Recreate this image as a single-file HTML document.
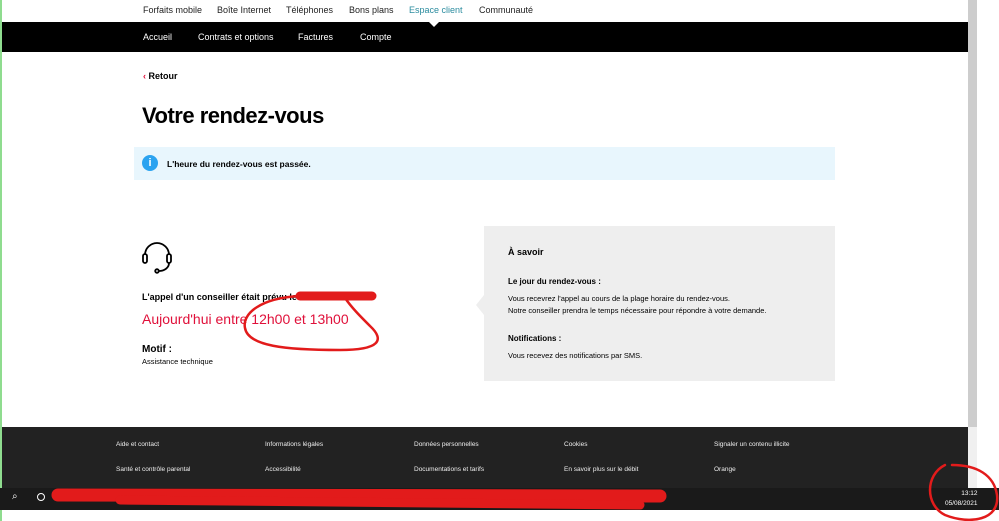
<!DOCTYPE html>
<html><head><meta charset="utf-8"><style>
*{margin:0;padding:0;box-sizing:border-box}
body{width:999px;height:521px;overflow:hidden;background:#fff;font-family:"Liberation Sans",sans-serif;position:relative;color:#000}
.a{position:absolute;white-space:nowrap}
.top span{position:absolute;top:5px;font-size:9px;color:#222}
.blk span{position:absolute;top:10px;font-size:9px;color:#fff}
.ft span{position:absolute;font-size:6.5px;color:#eee}
</style></head><body>
<div class="a" style="left:0;top:0;width:2px;height:521px;background:#8fdc8f"></div>
<div class="a top" style="left:0;top:0;width:968px;height:22px">
<span style="left:143px">Forfaits mobile</span>
<span style="left:217px">Boîte Internet</span>
<span style="left:286px">Téléphones</span>
<span style="left:349px">Bons plans</span>
<span style="left:409px;color:#2b8c9f">Espace client</span>
<span style="left:479px">Communauté</span>
</div>
<div class="a blk" style="left:2px;top:22px;width:966px;height:30px;background:#000">
<span style="left:141px">Accueil</span>
<span style="left:196px">Contrats et options</span>
<span style="left:296px">Factures</span>
<span style="left:358px">Compte</span>
</div>
<div class="a" style="left:429px;top:22px;width:0;height:0;border-left:5px solid transparent;border-right:5px solid transparent;border-top:5px solid #fff"></div>
<div class="a" style="left:143px;top:71px;font-size:9px;font-weight:bold"><span style="color:#e0103a">‹</span> Retour</div>
<div class="a" style="left:142px;top:103px;font-size:22px;font-weight:bold;letter-spacing:-0.5px">Votre rendez-vous</div>
<div class="a" style="left:134px;top:147px;width:701px;height:33px;background:#e8f6fd"></div>
<div class="a" style="left:142px;top:155px;width:16px;height:16px;border-radius:50%;background:#2ba3f0;color:#fff;font-size:11px;font-weight:bold;text-align:center;line-height:16px">i</div>
<div class="a" style="left:167px;top:159px;font-size:8.5px;font-weight:bold">L'heure du rendez-vous est passée.</div>
<svg class="a" style="left:141px;top:240px" width="34" height="34" viewBox="0 0 34 34" fill="none" stroke="#000" stroke-width="1.8"><path d="M4 15a12 12 0 0 1 24 0"/><rect x="2" y="14" width="4" height="9" rx="2"/><rect x="26" y="14" width="4" height="9" rx="2"/><path d="M28 23c0 5-5 8-10 8"/><circle cx="16" cy="31" r="1.8"/></svg>
<div class="a" style="left:142px;top:292px;font-size:9px;font-weight:bold">L'appel d'un conseiller était prévu le</div>
<div class="a" style="left:142px;top:311px;font-size:14px;color:#e0103a">Aujourd'hui entre 12h00 et 13h00</div>
<div class="a" style="left:142px;top:344px;font-size:10px;font-weight:bold">Motif :</div>
<div class="a" style="left:142px;top:357px;font-size:7.5px">Assistance technique</div>
<div class="a" style="left:484px;top:226px;width:351px;height:155px;background:#eee"></div>
<div class="a" style="left:476px;top:295px;width:0;height:0;border-top:10px solid transparent;border-bottom:10px solid transparent;border-right:8px solid #eee"></div>
<div class="a" style="left:508px;top:247px;font-size:9px;font-weight:bold">À savoir</div>
<div class="a" style="left:508px;top:277px;font-size:8px;font-weight:bold">Le jour du rendez-vous :</div>
<div class="a" style="left:508px;top:293px;font-size:7.5px;line-height:12px">Vous recevrez l'appel au cours de la plage horaire du rendez-vous.<br>Notre conseiller prendra le temps nécessaire pour répondre à votre demande.</div>
<div class="a" style="left:508px;top:334px;font-size:8px;font-weight:bold">Notifications :</div>
<div class="a" style="left:508px;top:351px;font-size:7.5px">Vous recevez des notifications par SMS.</div>
<div class="a" style="left:968px;top:0;width:9px;height:427px;background:#cdcdcd"></div>
<div class="a ft" style="left:2px;top:427px;width:966px;height:61px;background:#222">
<span style="left:114px;top:14px">Aide et contact</span>
<span style="left:263px;top:14px">Informations légales</span>
<span style="left:412px;top:14px">Données personnelles</span>
<span style="left:562px;top:14px">Cookies</span>
<span style="left:712px;top:14px">Signaler un contenu illicite</span>
<span style="left:114px;top:39px">Santé et contrôle parental</span>
<span style="left:263px;top:39px">Accessibilité</span>
<span style="left:412px;top:39px">Documentations et tarifs</span>
<span style="left:562px;top:39px">En savoir plus sur le débit</span>
<span style="left:712px;top:39px">Orange</span>
</div>
<div class="a" style="left:968px;top:427px;width:9px;height:61px;background:#f0f0f0"></div>
<div class="a" style="left:0;top:488px;width:999px;height:22px;background:#1a1a1a"></div>
<div class="a" style="left:12px;top:491px;font-size:10px;color:#fff">⌕</div>
<div class="a" style="left:37px;top:493px;width:8px;height:8px;border:1.5px solid #fff;border-radius:50%"></div>
<div class="a" style="left:945px;top:489px;font-size:6.5px;color:#fff;text-align:right;line-height:10px">13:12<br>05/08/2021</div>
<svg class="a" style="left:0;top:0" width="999" height="521" fill="none" stroke="#e21b1b" stroke-linecap="round">
<path d="M300 296 L372 296" stroke-width="9"/>
<path d="M300 296c-40 2-58 18-55 32 3 18 40 22 95 22 40 0 45-10 30-24-10-10-18-18-25-28" stroke-width="2.5"/>
<path d="M58 495 L660 496" stroke-width="13"/>
<path d="M120 500 L640 505" stroke-width="9"/>
<path d="M945 465c-20 10-20 40 0 50 25 10 55 5 52-20-3-20-20-30-45-30" stroke-width="2.5"/>
</svg>
</body></html>
